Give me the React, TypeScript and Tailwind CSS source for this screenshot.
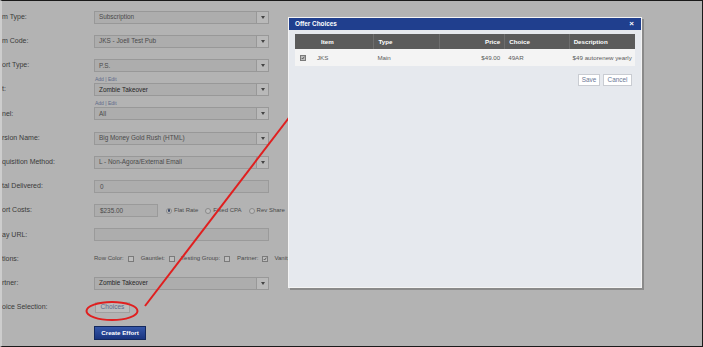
import React from 'react';

const font = { fontFamily: '"Liberation Sans", Arial, sans-serif' };

const Select = ({ value, dark }: { value: string; dark?: boolean }) => (
  <div className="flex h-[13px] w-[175px] items-stretch border border-[#989898] bg-[#adadad]">
    <div className={`flex flex-1 items-center pl-[4px] text-[6.4px] ${dark ? 'text-[#262626]' : 'text-[#4a4a4a]'}`}>
      {value}
    </div>
    <div className="flex w-[12px] items-center justify-center border-l border-[#989898] bg-[#b9b9b9]">
      <div className="h-0 w-0 border-x-[2.5px] border-t-[3px] border-x-transparent border-t-[#444]" />
    </div>
  </div>
);

const TextBox = ({ value, w = 'w-[175px]' }: { value?: string; w?: string }) => (
  <div className={`flex h-[13px] ${w} items-center border border-[#9a9a9a] bg-[#adadad] pl-[5px] text-[6.4px] text-[#4a4a4a]`}>
    {value}
  </div>
);

const AddEdit = () => (
  <div className="absolute -top-[7px] left-[1px] text-[5px] leading-[6px] text-[#5d6a88]">Add | Edit</div>
);

const Check = ({ on }: { on?: boolean }) => (
  <span className="relative inline-block h-[6px] w-[6px] shrink-0 border border-[#7a7a7a] bg-[#bdbdbd]">
    {on && (
      <svg viewBox="0 0 6 6" className="absolute inset-0 h-full w-full">
        <path d="M1 3 L2.5 4.5 L5 1" stroke="#333" strokeWidth="1" fill="none" />
      </svg>
    )}
  </span>
);

const Radio = ({ on }: { on?: boolean }) => (
  <span className="inline-flex h-[6px] w-[6px] shrink-0 items-center justify-center rounded-full border border-[#8a8a8a] bg-[#bdbdbd]">
    {on && <span className="h-[2.5px] w-[2.5px] rounded-full bg-[#3b4a6a]" />}
  </span>
);

const Row = ({ label, children }: { label: string; children?: React.ReactNode }) => (
  <div className="flex h-[24.2px] items-center">
    <div className="w-[92px] shrink-0 whitespace-nowrap text-[7px] text-[#3a3a3a]">{label}</div>
    <div className="relative flex items-center">{children}</div>
  </div>
);

const cols = [
  { name: '', w: 'w-[16px]' },
  { name: 'Item', w: 'w-[63px]' },
  { name: 'Type', w: 'w-[66px]' },
  { name: 'Price', w: 'w-[66px]', right: true },
  { name: 'Choice', w: 'w-[65px]' },
  { name: 'Description', w: 'w-[67px]' },
];

const rowData = ['', 'JKS', 'Main', '$49.00', '49AR', '$49 autorenew yearly'];

export default function App() {
  return (
    <div
      style={font}
      className="relative h-[347px] w-[703px] overflow-hidden border-y border-r border-l-2 border-y-[#1a1a1a] border-r-[#1a1a1a] border-l-[#cdcdcd] bg-[#b3b3b3]"
    >
      {/* form */}
      <div className="flex flex-col pt-[4px]">
        <Row label="m Type:"><Select value="Subscription" /></Row>
        <Row label="m Code:"><Select value="JKS - Joell Test Pub" /></Row>
        <Row label="ort Type:"><Select value="P.S." /></Row>
        <Row label="t:"><AddEdit /><Select value="Zombie Takeover" dark /></Row>
        <Row label="nel:"><AddEdit /><Select value="All" /></Row>
        <Row label="rsion Name:"><Select value="Big Money Gold Rush (HTML)" /></Row>
        <Row label="quisition Method:"><Select value="L - Non-Agora/External Email" /></Row>
        <Row label="tal Delivered:"><TextBox value="0" /></Row>
        <Row label="ort Costs:">
          <TextBox value="$235.00" w="w-[64px]" />
          <div className="ml-[8px] flex items-center whitespace-nowrap text-[6px] text-[#4a4a4a]">
            <Radio on /><span className="ml-[2px] mr-[7px]">Flat Rate</span>
            <Radio /><span className="ml-[2px] mr-[7px]">Fixed CPA</span>
            <Radio /><span className="ml-[2px]">Rev Share</span>
          </div>
        </Row>
        <Row label="ay URL:"><TextBox /></Row>
        <Row label="tions:">
          <div className="flex items-center whitespace-nowrap text-[6px] text-[#4a4a4a]">
            <span className="mr-[4px]">Row Color:</span><Check />
            <span className="ml-[7px] mr-[4px]">Gauntlet:</span><Check />
            <span className="ml-[6px] mr-[4px]">Testing Group:</span><Check />
            <span className="ml-[7px] mr-[4px]">Partner:</span><Check on />
            <span className="ml-[6px]">Vanity</span>
          </div>
        </Row>
        <Row label="rtner:"><Select value="Zombie Takeover" dark /></Row>
        <Row label="oice Selection:">
          <div className="ml-[1px] flex h-[11px] w-[35px] items-center justify-center border border-[#a0a0a0] bg-[#bcbcbc] text-[6.6px] text-[#5d6a8a]">
            Choices
          </div>
        </Row>
        <Row label="">
          <div className="mt-[2px] flex h-[14px] w-[52px] items-center justify-center border border-[#13285e] bg-gradient-to-b from-[#3556a8] to-[#1a3580] text-[6.2px] font-bold text-white">
            Create Effort
          </div>
        </Row>
      </div>

      {/* red annotation */}
      <svg className="pointer-events-none absolute left-0 top-0" width="703" height="347">
        <ellipse cx="110" cy="310" rx="25.5" ry="9" fill="none" stroke="#e01f1f" strokeWidth="2" />
        <line x1="143" y1="305" x2="312" y2="84" stroke="#e01f1f" strokeWidth="2" />
        <polygon points="316,78 308,84 314,88" fill="#e01f1f" />
      </svg>

      {/* modal */}
      <div className="absolute left-[286px] top-[16px] flex h-[271px] w-[354px] flex-col border border-[#f4f4f4] bg-[#e6e9ee] shadow-[2px_2px_0_#8a8a8a]">
        <div className="flex h-[12px] items-center justify-between bg-[#203f8e] pl-[6px] pr-[7px] text-[6.4px] font-bold text-white">
          <span>Offer Choices</span>
          <span className="text-[8px] leading-none">×</span>
        </div>
        <div className="px-[6px] pt-[4px]">
          <div className="flex h-[15px] bg-[#5b5b5b] text-[6.2px] font-bold text-white">
            {cols.map((c, i) => (
              <div
                key={i}
                className={`${c.w} flex items-center px-[4px] ${i > 1 ? 'border-l border-[#6e6e6e]' : ''} ${c.right ? 'justify-end' : ''} ${i === 1 ? 'pl-[10px]' : ''}`}
              >
                {c.name}
              </div>
            ))}
          </div>
          <div className="flex h-[17px] bg-[#f4f4f4] text-[6.2px] text-[#5a5a5a]">
            {cols.map((c, i) => (
              <div
                key={i}
                className={`${c.w} flex items-center overflow-hidden whitespace-nowrap px-[4px] ${c.right ? 'justify-end' : ''} ${i === 0 ? 'justify-center' : ''} ${i === 1 ? 'pl-[6px]' : ''}`}
              >
                {i === 0 ? <Check on /> : rowData[i]}
              </div>
            ))}
          </div>
          <div className="mt-[8px] flex justify-end gap-[3px] pr-[3px]">
            <div className="flex h-[12px] w-[22px] items-center justify-center border border-[#c9ccd2] bg-white text-[6.4px] text-[#6b7896]">
              Save
            </div>
            <div className="flex h-[12px] w-[29px] items-center justify-center border border-[#c9ccd2] bg-white text-[6.4px] text-[#6b7896]">
              Cancel
            </div>
          </div>
        </div>
      </div>
    </div>
  );
}
